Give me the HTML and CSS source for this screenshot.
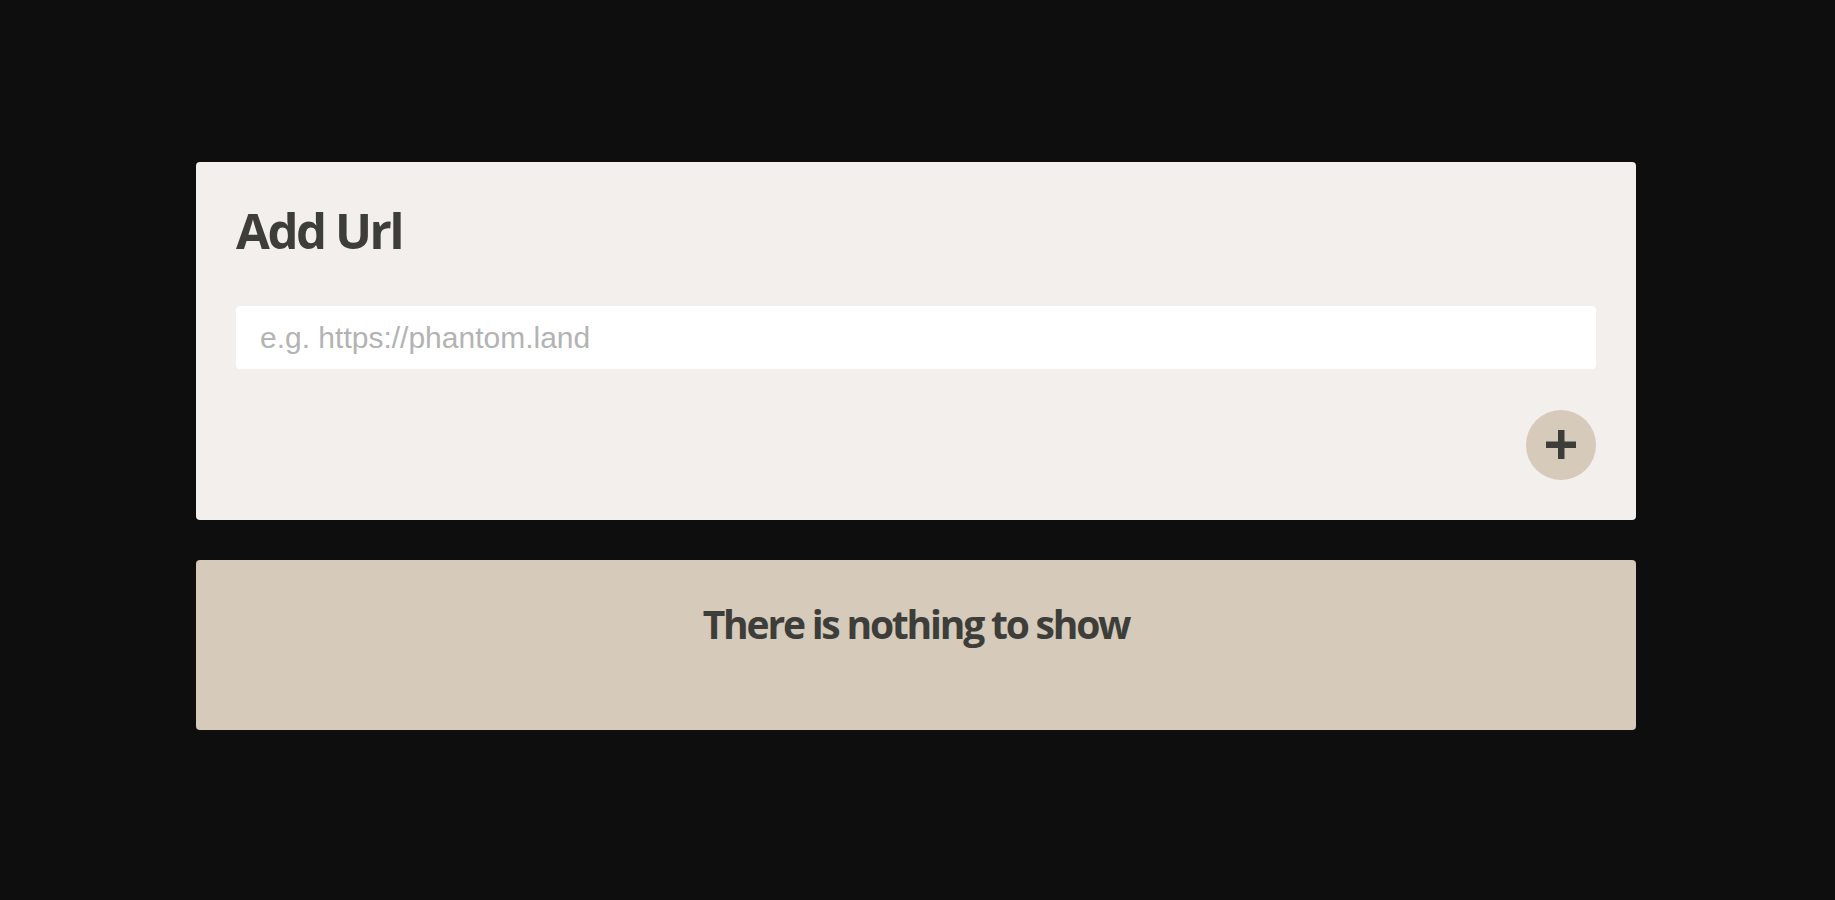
FILE: index.html
```html
<!DOCTYPE html>
<html lang="en">
<head>
<meta charset="utf-8">
<title>Add Url</title>
<link rel="stylesheet" href="styles.css">
</head>
<body>
<main class="wrap">
  <section class="card add-card">
    <h1 class="title">Add Url</h1>
    <input class="url-input" type="text" placeholder="e.g. https://phantom.land">
    <div class="actions">
      <button class="add-btn" type="button" aria-label="Add">
        <svg width="30" height="30" viewBox="0 0 30 30"><rect x="0" y="11.5" width="30" height="6.5" fill="#3d3e39"/><rect x="12" y="0" width="6.5" height="29" fill="#3d3e39"/></svg>
      </button>
    </div>
  </section>
  <section class="card empty-card">
    <h2 class="empty-text">There is nothing to show</h2>
  </section>
</main>
</body>
</html>
```

FILE: styles.css
```css
html, body {
  margin: 0;
  padding: 0;
  background: #0e0e0e;
}
body {
  font-family: "Open Sans", "Noto Sans", sans-serif;
  color: #3d3e39;
}
.wrap {
  width: 1440px;
  margin-left: 196px;
  padding-top: 162px;
  display: flex;
  flex-direction: column;
  gap: 40px;
}
.card {
  border-radius: 4px;
  box-sizing: border-box;
}
.add-card {
  background: #f2efec;
  padding: 38px 40px 40px;
  display: flex;
  flex-direction: column;
}
.title {
  margin: 0;
  font-size: 49px;
  line-height: 60px;
  font-weight: 700;
  letter-spacing: -2.4px;
}
.url-input {
  margin-top: 46px;
  height: 63px;
  box-sizing: border-box;
  border: none;
  border-radius: 4px;
  background: #ffffff;
  padding: 0 24px;
  font-family: "Liberation Sans", Arial, sans-serif;
  font-size: 30px;
  color: #3d3e39;
  outline: none;
}
.url-input::placeholder {
  color: #b3b3b3;
}
.actions {
  margin-top: 41px;
  display: flex;
  justify-content: flex-end;
}
.add-btn {
  width: 70px;
  height: 70px;
  border-radius: 50%;
  border: none;
  background: #d6cabb;
  padding: 0;
  display: flex;
  align-items: center;
  justify-content: center;
  cursor: pointer;
}
.empty-card {
  background: #d6cabb;
  padding: 40px 40px 82px;
  text-align: center;
}
.empty-text {
  margin: 0;
  font-size: 39px;
  line-height: 48px;
  font-weight: 700;
  letter-spacing: -2.2px;
}
```
